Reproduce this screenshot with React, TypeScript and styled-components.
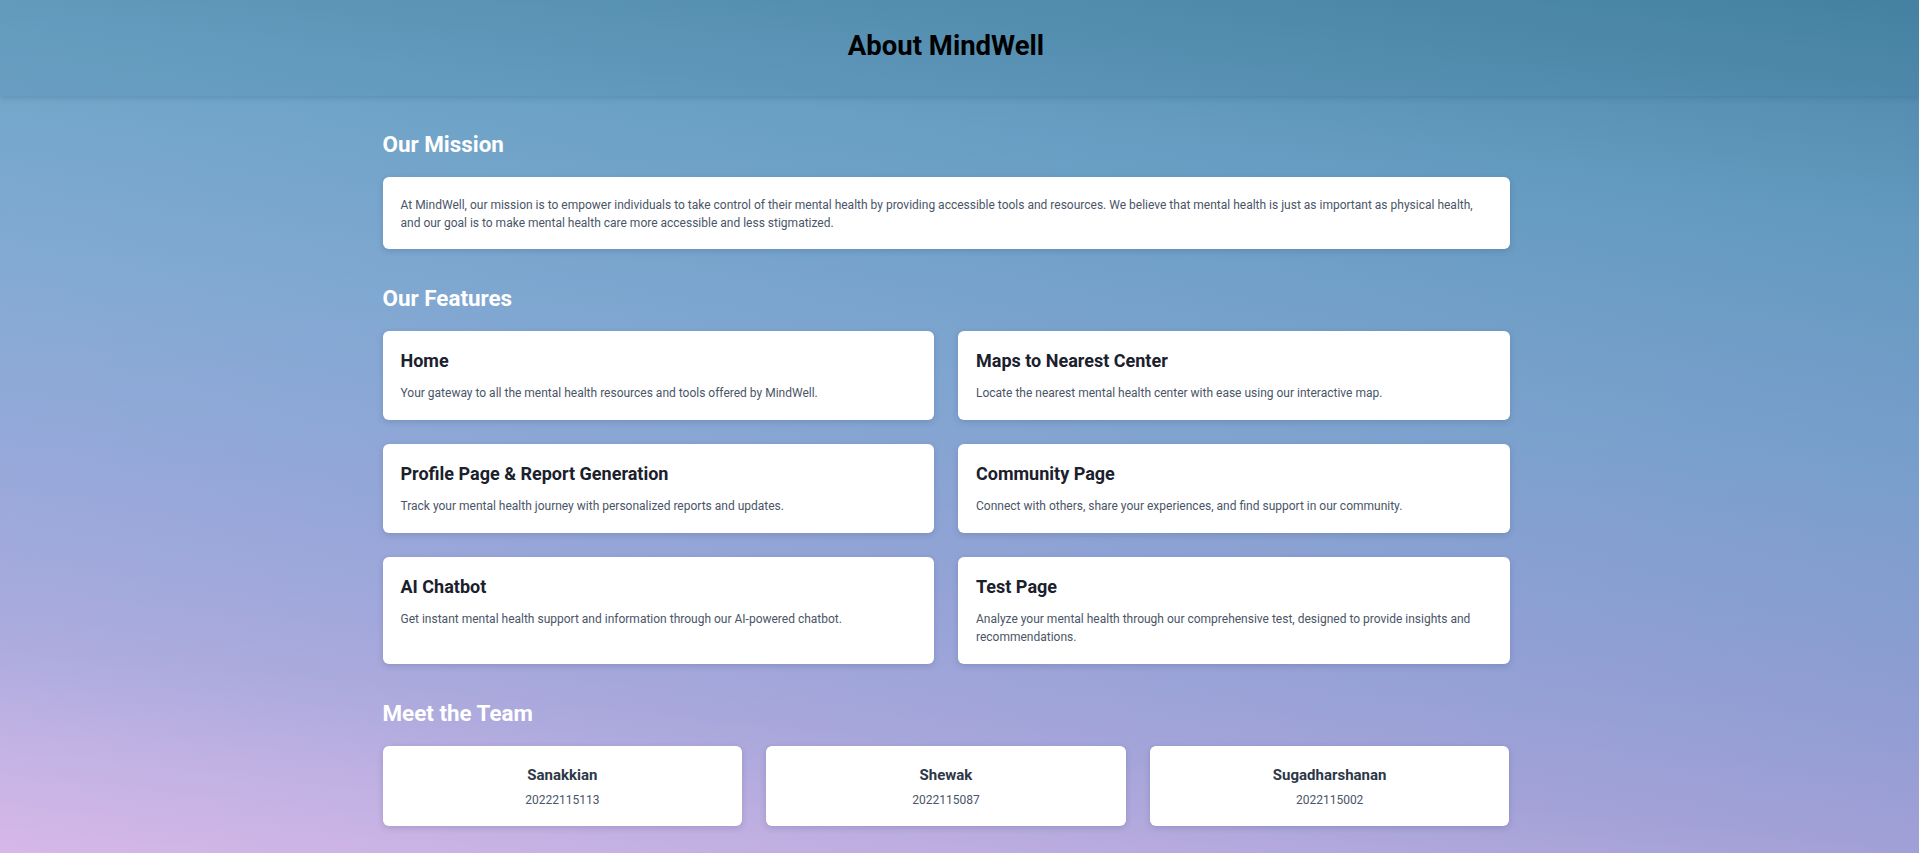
import React from "react";
import styled, { createGlobalStyle } from "styled-components";

const GlobalStyle = createGlobalStyle`
  html, body {
    margin: 0;
    padding: 0;
  }
  body {
    font-family: Roboto, "Noto Sans", "Liberation Sans", sans-serif;
    -webkit-font-smoothing: antialiased;
  }
  * { box-sizing: border-box; }
`;

const Page = styled.div`
  min-height: 100vh;
  background:
    linear-gradient(to right, rgba(255, 255, 255, 0.04), rgba(40, 50, 120, 0.07)),
    linear-gradient(
      186deg,
      #4c8ca8 0%,
      #68a1c5 22%,
      #7fa7d2 45%,
      #95a5d9 65%,
      #a9a8dd 80%,
      #c1b0e3 90%,
      #d4b5e8 100%
    );
`;

const Header = styled.header`
  height: 96px;
  display: flex;
  align-items: center;
  justify-content: center;
  padding: 0 27px 6px 0;
  background: rgba(30, 100, 130, 0.12);
  box-shadow: 0 2px 6px rgba(20, 60, 90, 0.18);
`;

const Title = styled.h1`
  margin: 0;
  font-size: 27.5px;
  font-weight: 700;
  color: #000;
  line-height: normal;
`;

const Content = styled.div`
  padding: 35px 27px 20px 0;
`;

const Main = styled.main`
  width: 1127px;
  margin: 0 auto;
  display: flex;
  flex-direction: column;
  gap: 36.5px;
`;

const Section = styled.section`
  display: flex;
  flex-direction: column;
`;

const SectionTitle = styled.h2`
  margin: 0 0 19.5px;
  font-size: 22.4px;
  font-weight: 700;
  color: #fff;
  line-height: normal;
`;

const Card = styled.div<{ $center?: boolean }>`
  background: #fff;
  border-radius: 6px;
  padding: 19px 18px 17.5px;
  box-shadow: 0 2px 6px rgba(40, 50, 90, 0.18);
  text-align: ${(p) => (p.$center ? "center" : "left")};
`;

const MissionCard = styled(Card)`
  padding-bottom: 17px;
`;

const MemberCard = styled(Card)`
  padding: 20px 18px 17px;
`;

const BodyText = styled.p`
  margin: 0;
  font-size: 12px;
  line-height: 18px;
  color: #4a5568;
`;

const FeatureGrid = styled.div`
  display: grid;
  grid-template-columns: 1fr 1fr;
  gap: 24px;
`;

const FeatureTitle = styled.h3`
  margin: 0 0 13.5px;
  font-size: 18px;
  font-weight: 700;
  color: #1a202c;
  line-height: normal;
`;

const TeamGrid = styled.div`
  display: grid;
  grid-template-columns: repeat(3, 1fr);
  gap: 24px;
`;

const MemberName = styled.h4`
  margin: 0 0 7px;
  font-size: 15px;
  font-weight: 700;
  color: #2d3748;
  line-height: normal;
`;

const features = [
  {
    title: "Home",
    text: "Your gateway to all the mental health resources and tools offered by MindWell.",
  },
  {
    title: "Maps to Nearest Center",
    text: "Locate the nearest mental health center with ease using our interactive map.",
  },
  {
    title: "Profile Page & Report Generation",
    text: "Track your mental health journey with personalized reports and updates.",
  },
  {
    title: "Community Page",
    text: "Connect with others, share your experiences, and find support in our community.",
  },
  {
    title: "AI Chatbot",
    text: "Get instant mental health support and information through our AI-powered chatbot.",
  },
  {
    title: "Test Page",
    text: "Analyze your mental health through our comprehensive test, designed to provide insights and recommendations.",
  },
];

const team = [
  { name: "Sanakkian", id: "20222115113" },
  { name: "Shewak", id: "2022115087" },
  { name: "Sugadharshanan", id: "2022115002" },
];

export default function App() {
  return (
    <>
      <GlobalStyle />
      <Page>
        <Header>
          <Title>About MindWell</Title>
        </Header>
        <Content>
          <Main>
            <Section>
              <SectionTitle>Our Mission</SectionTitle>
              <MissionCard>
                <BodyText>
                  At MindWell, our mission is to empower individuals to take control of their
                  mental health by providing accessible tools and resources. We believe that
                  mental health is just as important as physical health, and our goal is to make
                  mental health care more accessible and less stigmatized.
                </BodyText>
              </MissionCard>
            </Section>
            <Section>
              <SectionTitle>Our Features</SectionTitle>
              <FeatureGrid>
                {features.map((f) => (
                  <Card key={f.title}>
                    <FeatureTitle>{f.title}</FeatureTitle>
                    <BodyText>{f.text}</BodyText>
                  </Card>
                ))}
              </FeatureGrid>
            </Section>
            <Section>
              <SectionTitle>Meet the Team</SectionTitle>
              <TeamGrid>
                {team.map((m) => (
                  <MemberCard key={m.name} $center>
                    <MemberName>{m.name}</MemberName>
                    <BodyText>{m.id}</BodyText>
                  </MemberCard>
                ))}
              </TeamGrid>
            </Section>
          </Main>
        </Content>
      </Page>
    </>
  );
}
